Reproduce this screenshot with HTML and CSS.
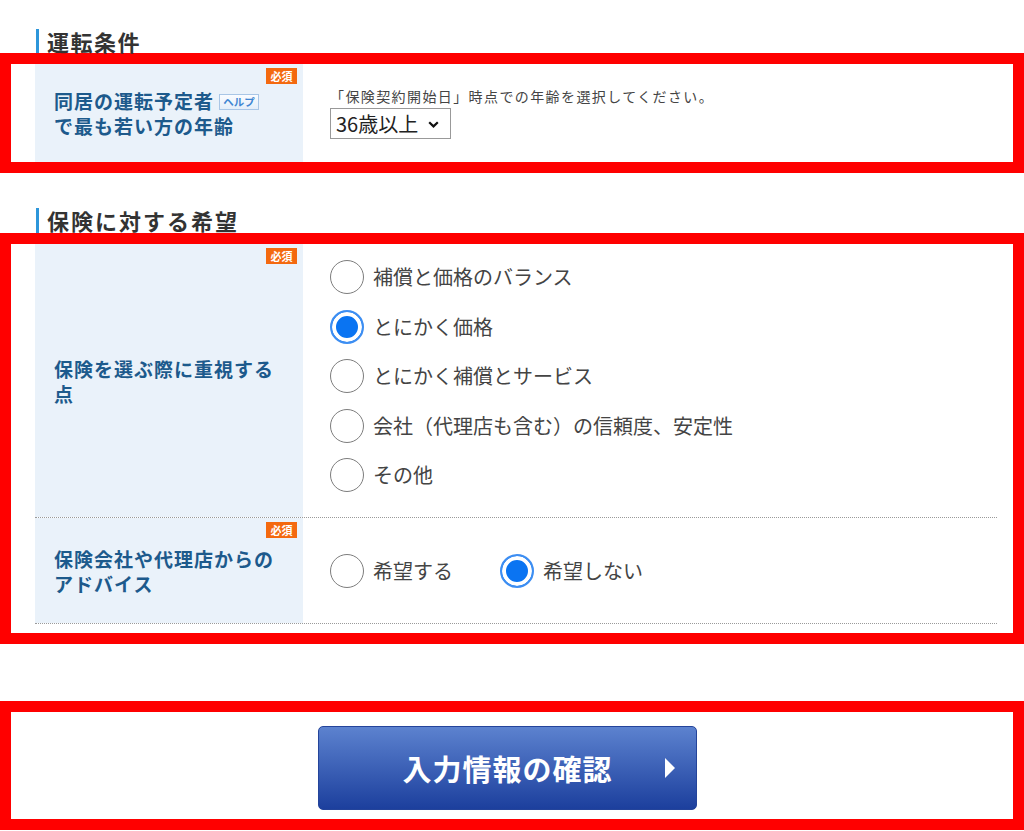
FILE: index.html
```html
<!DOCTYPE html>
<html lang="ja">
<head>
  <meta charset="utf-8">
  <title>見積もり入力</title>
  <link rel="stylesheet" href="styles.css">
</head>
<body>
  <h2 class="section-title first">運転条件</h2>
  <div class="mark">
    <div class="form-table">
      <div class="form-row">
        <div class="label-cell">
          <span class="required">必須</span>
          <p class="label-text">同居の運転予定者<span class="help">ヘルプ</span><br>で最も若い方の年齢</p>
        </div>
        <div class="value-cell">
          <p class="hint">「保険契約開始日」時点での年齢を選択してください。</p>
          <span class="select-wrap">
            <select class="age-select">
              <option>36歳以上</option>
              <option>26歳以上</option>
              <option>21歳以上</option>
              <option>全年齢</option>
            </select>
            <svg class="chevron" width="11" height="7" viewBox="0 0 11 7"><path d="M1.2 1.2 L5.5 5.4 L9.8 1.2" fill="none" stroke="#111" stroke-width="2.2"/></svg>
          </span>
        </div>
      </div>
    </div>
  </div>

  <h2 class="section-title second">保険に対する希望</h2>
  <div class="mark padded">
    <div class="form-table">
      <div class="form-row dotted">
        <div class="label-cell">
          <span class="required">必須</span>
          <p class="label-text">保険を選ぶ際に重視する点</p>
        </div>
        <div class="value-cell options">
          <label class="option"><input type="radio" name="priority"><span>補償と価格のバランス</span></label>
          <label class="option"><input type="radio" name="priority" checked><span>とにかく価格</span></label>
          <label class="option"><input type="radio" name="priority"><span>とにかく補償とサービス</span></label>
          <label class="option"><input type="radio" name="priority"><span>会社（代理店も含む）の信頼度、安定性</span></label>
          <label class="option"><input type="radio" name="priority"><span>その他</span></label>
        </div>
      </div>
      <div class="form-row dotted short">
        <div class="label-cell">
          <span class="required">必須</span>
          <p class="label-text">保険会社や代理店からのアドバイス</p>
        </div>
        <div class="value-cell inline">
          <label class="option"><input type="radio" name="advice"><span>希望する</span></label>
          <label class="option"><input type="radio" name="advice" checked><span>希望しない</span></label>
        </div>
      </div>
    </div>
  </div>

  <div class="mark submit-area">
    <button class="submit-btn" type="button">入力情報の確認<span class="arrow"></span></button>
  </div>
</body>
</html>
```

FILE: styles.css
```css
body {
  margin: 0;
  padding: 29px 0 0;
  font-family: "Noto Sans CJK JP", "Noto Sans", sans-serif;
  color: #444;
  background: #fff;
}

.section-title {
  margin: 0 0 0 36px;
  padding-left: 8px;
  border-left: 3px solid #2d96da;
  font-size: 22px;
  line-height: 24px;
  letter-spacing: 1.5px;
  font-weight: bold;
  color: #333;
}

.section-title.second {
  margin-top: 35px;
  line-height: 25px;
  letter-spacing: 2px;
}

.mark {
  border: 11px solid #ff0000;
  padding: 0 16px 0 24px;
}

.mark.padded {
  padding-bottom: 9px;
}

.form-row {
  display: grid;
  grid-template-columns: 268px 1fr;
  min-height: 98px;
}

.form-row.dotted {
  border-bottom: 1px dotted #9a9a9a;
}

.form-row.short {
  min-height: 105px;
}

.label-cell {
  position: relative;
  display: flex;
  align-items: center;
  padding: 0 16px 0 19px;
  background: #eaf2fa;
}

.label-text {
  margin: 0;
  font-size: 19px;
  line-height: 25px;
  letter-spacing: 1px;
  font-weight: bold;
  color: #1d5a8c;
}

.required {
  position: absolute;
  top: 4px;
  right: 6px;
  width: 31px;
  height: 16px;
  background: #f4690f;
  color: #fff;
  font-size: 11px;
  line-height: 16px;
  font-weight: bold;
  text-align: center;
}

.help {
  display: inline-block;
  width: 38px;
  height: 14px;
  margin-left: 5px;
  border: 1px solid #a9c6e6;
  background: linear-gradient(#fafcff, #e4eef9);
  color: #3f86d2;
  font-size: 10.5px;
  line-height: 14px;
  letter-spacing: 0;
  font-weight: bold;
  text-align: center;
  vertical-align: 3px;
}

.value-cell {
  display: flex;
  flex-direction: column;
  justify-content: center;
  align-items: flex-start;
  padding-left: 27px;
}

.hint {
  margin: 0 0 3px;
  font-size: 14px;
  line-height: 18px;
  letter-spacing: 1.4px;
  color: #444;
}

.select-wrap {
  position: relative;
  display: block;
}

.age-select {
  appearance: none;
  display: block;
  width: 121px;
  height: 31px;
  padding: 0 0 0 5px;
  border: 1px solid #999;
  border-radius: 0;
  background: #fff;
  font-family: inherit;
  font-size: 20px;
  color: #222;
}

.chevron {
  position: absolute;
  left: 98px;
  top: 13px;
  pointer-events: none;
}

.options {
  gap: 15.5px;
  padding-top: 16px;
  padding-bottom: 25px;
}

.inline {
  flex-direction: row;
  align-items: center;
  justify-content: flex-start;
  gap: 0;
}

.inline .option {
  width: 170px;
}

.option {
  display: flex;
  align-items: center;
  gap: 9px;
  font-size: 20px;
  line-height: 34px;
  color: #444;
}

.option input {
  appearance: none;
  flex: none;
  width: 34px;
  height: 34px;
  margin: 0;
  border: 1.5px solid #7d7d7d;
  border-radius: 50%;
  background: #fff;
}

.option input:checked {
  border: 2px solid #3d8ef2;
  background: #0a74f2;
  box-shadow: inset 0 0 0 4px #fff;
}

.submit-area {
  margin-top: 57px;
  padding: 14px 9px 9px 0;
  display: flex;
  justify-content: center;
}

.submit-btn {
  position: relative;
  width: 379px;
  height: 84px;
  border: 1px solid #24449a;
  border-radius: 5px;
  background: linear-gradient(#5c82cf, #1c3f9d);
  color: #fff;
  font-family: inherit;
  font-size: 29px;
  font-weight: bold;
  letter-spacing: 1px;
}

.arrow {
  position: absolute;
  right: 21px;
  top: 50%;
  margin-top: -10px;
  border-left: 10px solid #fff;
  border-top: 10px solid transparent;
  border-bottom: 10px solid transparent;
}
```
